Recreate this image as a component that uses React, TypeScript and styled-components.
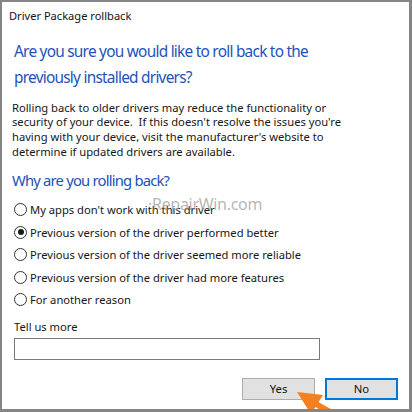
import React, { useState } from "react";
import styled, { createGlobalStyle } from "styled-components";

const GlobalStyle = createGlobalStyle`
  html, body {
    margin: 0;
    padding: 0;
    background: #ffffff;
  }
  body {
    font-family: "Noto Sans", "Open Sans", sans-serif;
  }
`;

const reasons = [
  "My apps don't work with this driver",
  "Previous version of the driver performed better",
  "Previous version of the driver seemed more reliable",
  "Previous version of the driver had more features",
  "For another reason",
];

const App: React.FC = () => {
  const [picked, setPicked] = useState(1);

  return (
    <>
      <GlobalStyle />
      <Window>
        <TitleBar>Driver Package rollback</TitleBar>
        <Content>
          <Heading>
            Are you sure you would like to roll back to the
            <br />
            previously installed drivers?
          </Heading>
          <Body>
            Rolling back to older drivers may reduce the functionality or
            <br />
            security of your device.&nbsp; If this doesn't resolve the issues you're
            <br />
            having with your device, visit the manufacturer's website to
            <br />
            determine if updated drivers are available.
          </Body>
          <SubHeading>Why are you rolling back?</SubHeading>
          <RadioList>
            {reasons.map((r, i) => (
              <RadioRow key={r} onClick={() => setPicked(i)}>
                <RadioCircle $checked={picked === i} />
                {r}
              </RadioRow>
            ))}
          </RadioList>
          <Label>Tell us more</Label>
          <TextBox />
          <Buttons>
            <Button>Yes</Button>
            <Button $focused>No</Button>
          </Buttons>
        </Content>
        <Watermark>&middot;RepairWin.com</Watermark>
        <Arrow viewBox="0 0 70 40" width="70" height="40">
          <path d="M34 22 L62 38" stroke="#f5801f" strokeWidth="6" />
          <path d="M15 10 L41 13 L29 32 Z" fill="#f5801f" />
        </Arrow>
      </Window>
    </>
  );
};

const Window = styled.div`
  position: relative;
  width: 412px;
  height: 412px;
  box-sizing: border-box;
  border: 2px solid #858585;
  border-right-width: 3px;
  border-bottom-width: 3px;
  background: #ffffff;
  overflow: hidden;
  color: #1b1b1b;
`;

const TitleBar = styled.div`
  height: 26px;
  padding: 6px 0 0 7px;
  box-sizing: border-box;
  font-size: 11.1px;
  color: #111;
`;

const Content = styled.div`
  padding: 11px 10px 0 10px;
  display: flex;
  flex-direction: column;
`;

const Heading = styled.div`
  font-size: 15.4px;
  letter-spacing: -0.75px;
  line-height: 26px;
  color: #2152b8;
  padding-left: 2px;
  margin-bottom: 9.6px;
`;

const Body = styled.div`
  font-size: 11.2px;
  line-height: 14.7px;
  color: #161616;
  white-space: nowrap;
  margin-bottom: 7.6px;
`;

const SubHeading = styled.div`
  font-size: 14.8px;
  letter-spacing: -0.8px;
  line-height: 26px;
  color: #2152b8;
  margin-bottom: 5.7px;
`;

const RadioList = styled.div`
  display: flex;
  flex-direction: column;
`;

const RadioRow = styled.div`
  display: flex;
  align-items: center;
  gap: 3px;
  height: 22.5px;
  font-size: 11.2px;
  color: #161616;
  cursor: default;
`;

const RadioCircle = styled.span<{ $checked: boolean }>`
  position: relative;
  width: 13px;
  height: 13px;
  box-sizing: border-box;
  border: 1px solid #333;
  border-radius: 50%;
  flex: none;
  margin-left: 2px;

  &::after {
    content: "";
    display: ${(p) => (p.$checked ? "block" : "none")};
    position: absolute;
    left: 2.5px;
    top: 2.5px;
    width: 6px;
    height: 6px;
    border-radius: 50%;
    background: #1b1b1b;
  }
`;

const Label = styled.div`
  font-size: 11.2px;
  line-height: 16px;
  color: #161616;
  margin-top: 7.8px;
  padding-left: 2px;
`;

const TextBox = styled.div`
  width: 306px;
  height: 22px;
  box-sizing: border-box;
  border: 1px solid #7a7a7a;
  margin: 3px 0 0 2px;
`;

const Buttons = styled.div`
  display: flex;
  justify-content: flex-end;
  gap: 10px;
  margin-top: 18px;
  padding-right: 1px;
`;

const Button = styled.div<{ $focused?: boolean }>`
  width: 73px;
  height: 22px;
  box-sizing: border-box;
  display: flex;
  align-items: center;
  justify-content: center;
  background: #e1e1e1;
  border: ${(p) => (p.$focused ? "2px solid #0078d7" : "1px solid #adadad")};
  font-size: 11.3px;
  color: #111;
`;

const Watermark = styled.div`
  position: absolute;
  left: 146px;
  top: 191px;
  font-size: 16px;
  letter-spacing: -0.3px;
  color: rgba(150, 150, 150, 0.7);
  pointer-events: none;
`;

const Arrow = styled.svg`
  position: absolute;
  left: 280px;
  top: 380px;
  pointer-events: none;
`;

export default App;
